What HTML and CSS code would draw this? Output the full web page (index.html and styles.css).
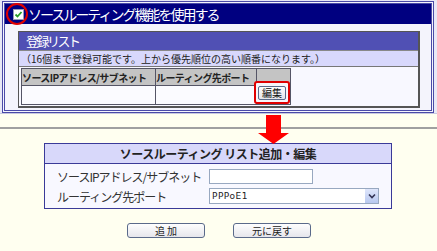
FILE: index.html
```html
<!DOCTYPE html>
<html lang="ja">
<head>
<meta charset="utf-8">
<link rel="stylesheet" href="styles.css">
</head>
<body>
<div class="top">
  <div class="frame">
    <div class="titlebar">
      <span class="chk"><svg width="9" height="9" viewBox="0 0 9 9"><path d="M1.5 4.5 L3.5 6.5 L7.5 2" fill="none" stroke="#2a9a2a" stroke-width="1.8"/></svg></span>
      <span class="ttl">ソースルーティング機能を使用する</span>
      <span class="ring"></span>
    </div>
    <div class="listbox">
      <div class="lb-head">登録リスト</div>
      <div class="lb-note">（16個まで登録可能です。上から優先順位の高い順番になります。）</div>
      <div class="lb-body">
        <table class="grid">
          <tr class="gh"><th class="c1">ソースIPアドレス/サブネット</th><th class="c2">ルーティング先ポート</th><th class="c3"></th></tr>
          <tr class="gd"><td></td><td></td><td class="cb"><span class="hl"><button class="edit">編集</button></span></td></tr>
        </table>
      </div>
    </div>
  </div>
</div>
<div class="bottom">
  <svg class="arrow" width="32" height="30" viewBox="0 0 32 30"><path d="M8 0 H23 V18 H31 L15.5 29 L0 18 H8 Z" fill="#f00"/></svg>
  <div class="dialog">
    <div class="dh">ソースルーティング リスト追加・編集</div>
    <div class="db">
      <div class="row"><span class="lbl">ソースIPアドレス/サブネット</span><span class="inp"></span></div>
      <div class="row"><span class="lbl">ルーティング先ポート</span><span class="sel"><span class="selv">PPPoE1</span><span class="selb"><svg width="8" height="6" viewBox="0 0 8 6"><path d="M1 1.5 L4 4.5 L7 1.5" fill="none" stroke="#335" stroke-width="1.6"/></svg></span></span></div>
    </div>
  </div>
  <div class="btns">
    <button class="btn">追 加</button>
    <button class="btn">元に戻す</button>
  </div>
</div>
</body>
</html>
```
FILE: styles.css
```css
html, body { margin: 0; padding: 0; }
body {
  width: 437px; height: 251px; overflow: hidden;
  background: #fffff0;
  font-family: "Noto Sans CJK JP", "Noto Sans", sans-serif;
  color: #222;
}
.top {
  background: #e8e8f6;
  padding: 1px 3px 1px 2px;
  height: 114px;
  box-sizing: border-box;
  border-bottom: 1px solid #c8c8e0;
}
.frame {
  border: 3px double #4a4aa8;
  background: #f4f4fc;
  height: 112px;
  box-sizing: border-box;
  padding: 0;
}
.titlebar {
  position: relative;
  background: #000080;
  color: #fff;
  height: 20px;
  display: flex;
  align-items: center;
  padding-left: 8px;
}
.chk {
  width: 9px; height: 9px;
  background: #fff;
  border: 1px solid #9a9ab8;
  display: flex; align-items: center; justify-content: center;
  margin-right: 4px;
}
.chk svg { display: block; }
.ttl { font-size: 14px; letter-spacing: -2px; line-height: 20px; }
.ring {
  position: absolute; left: 1px; top: -1px;
  width: 18px; height: 18px;
  border: 2px solid #e00000;
  border-radius: 50%;
}
.listbox {
  margin: 7px 11px 0 13px;
  border: 1px solid #555;
  border-right-width: 2px; border-bottom-width: 2px;
  background: #f8f8ff;
  height: 77px;
  box-sizing: border-box;
}
.lb-head {
  background: #5050b4;
  color: #fff;
  height: 18px;
  line-height: 18px;
  font-size: 13px;
  letter-spacing: -2.5px;
  padding-left: 7px;
  border-bottom: 1px solid #888;
}
.lb-note {
  background: #d8d8fc;
  height: 15px;
  line-height: 15px;
  font-size: 10px;
  color: #222;
  padding-left: 2px;
  border-bottom: 1px solid #777;
}
.lb-body { padding: 1px 0 0 2px; }
.grid {
  border-collapse: collapse;
  border: 1px solid #444;
  font-size: 10px;
}
.grid th, .grid td { border: 1px solid #556; padding: 0; }
.gh th {
  background: #c4c4c4;
  height: 16px;
  font-weight: bold;
  text-align: left;
  letter-spacing: -0.6px;
  white-space: nowrap;
}
.c1 { width: 133px; }
.c2 { width: 100px; }
.c3 { width: 33px; }
.gd td { height: 18px; background: #fbfbff; }
.cb { position: relative; }
.hl {
  position: absolute; left: -3px; top: -5px;
  width: 36px; height: 23px;
  border: 2px solid #e00000;
  border-radius: 3px;
  display: flex; align-items: center; justify-content: center;
  background: #f6f6fa;
  box-sizing: border-box;
}
.edit {
  font-family: inherit;
  font-size: 10px;
  height: 14px; width: 28px;
  padding: 0;
  line-height: 12px;
  background: linear-gradient(#fdfdfd, #e4e4ea);
  border: 1px solid #5a6a8a;
  border-radius: 2px;
  color: #111;
}
.bottom {
  position: relative;
  border-top: 2px solid #a0a0a0;
  margin-top: 13px;
  padding-top: 14px;
  height: 120px;
}
.arrow { position: absolute; left: 258px; top: -14px; }
.dialog {
  margin-left: 44px;
  width: 348px;
  border: 1px solid #3a3a98;
  background: #f8f8ff;
  box-sizing: border-box;
}
.dh {
  background: #d8d8fa;
  height: 19px; line-height: 19px;
  text-align: center;
  font-size: 12px;
  font-weight: bold;
  letter-spacing: -0.5px;
  border-bottom: 1px solid #3a3a98;
}
.db { padding: 4px 0 4px 12px; display: flex; flex-direction: column; gap: 4px; }
.row { display: flex; align-items: center; height: 16px; }
.lbl { width: 152px; font-size: 12px; letter-spacing: -1px; color: #333; }
.inp {
  width: 104px; height: 15px;
  border: 1px solid #98a8c0;
  background: #fff;
  box-sizing: border-box;
}
.sel {
  width: 170px; height: 16px;
  border: 1px solid #98a8c0;
  background: #fff;
  box-sizing: border-box;
  display: flex; align-items: center; justify-content: space-between;
}
.selv { font-family: "DejaVu Sans", sans-serif; font-size: 9px; padding-left: 2px; letter-spacing: 0.5px; }
.selb {
  width: 13px; height: 14px;
  background: linear-gradient(#dfe6fb, #b8c8f0);
  display: flex; align-items: center; justify-content: center;
}
.btns { display: flex; gap: 28px; margin: 14px 0 0 127px; }
.btn {
  width: 78px; height: 15px;
  padding: 0;
  font-family: inherit;
  font-size: 10px;
  line-height: 13px;
  background: linear-gradient(#fefefe, #e6e6ec);
  border: 1px solid #5a6a8a;
  border-radius: 3px;
  color: #222;
}
```
